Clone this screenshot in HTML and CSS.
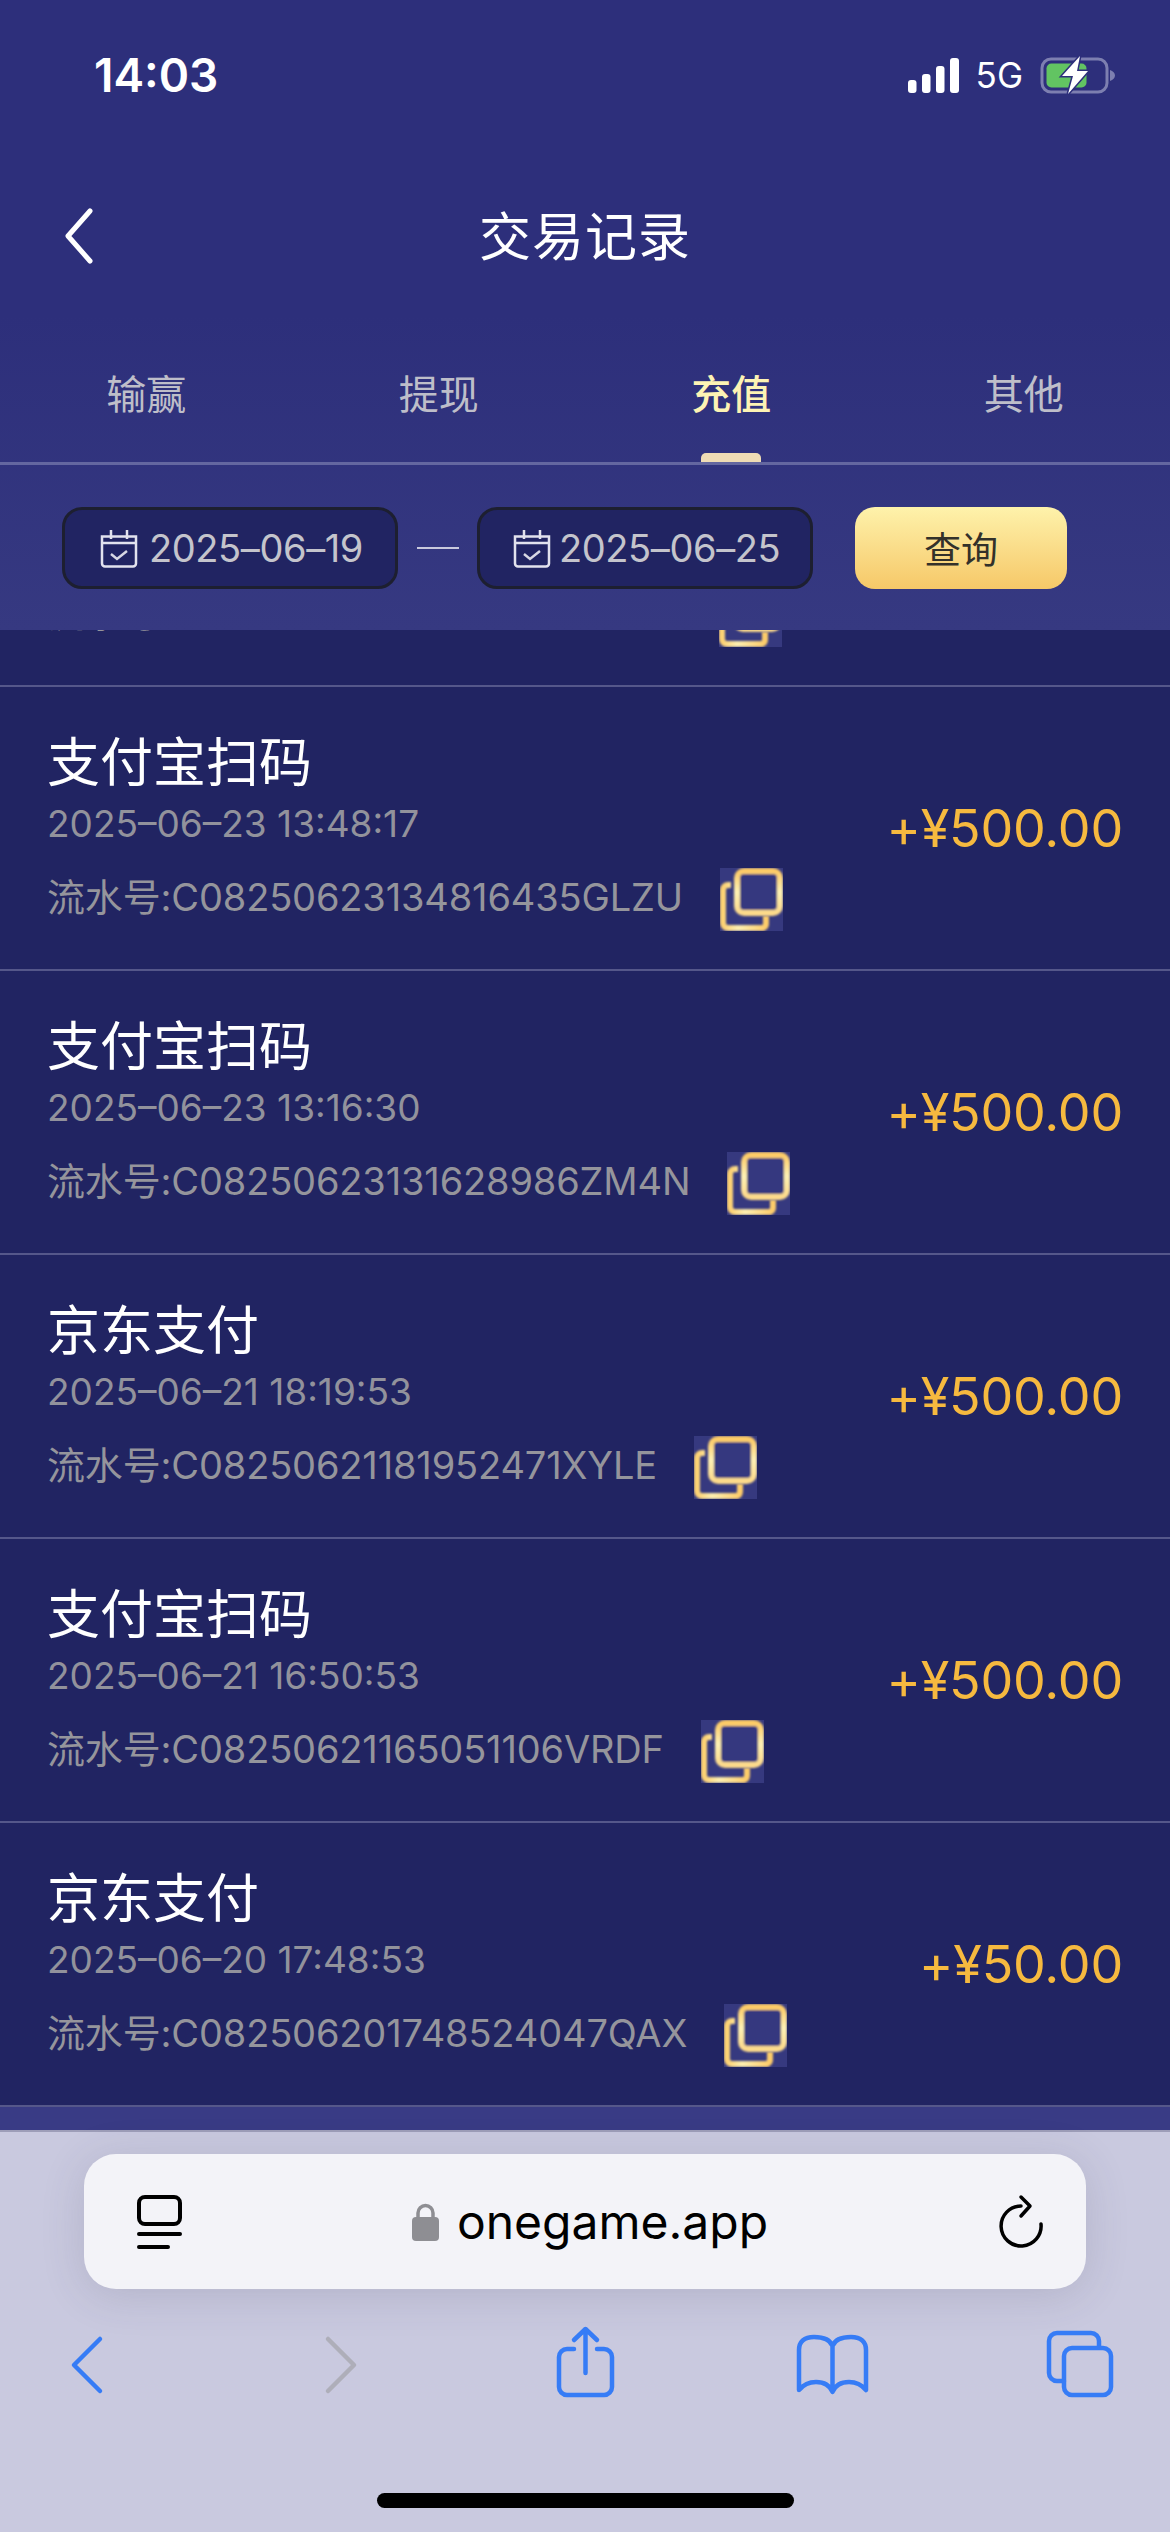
FILE: index.html
```html
<!DOCTYPE html>
<html lang="zh-CN">
<head>
<meta charset="utf-8">
<title>交易记录</title>
<link rel="stylesheet" href="styles.css">
</head>
<body>
<svg class="sprite" width="0" height="0" aria-hidden="true">
  <defs>
    <linearGradient id="gold" x1="0" y1="0" x2="1" y2="0">
      <stop offset="0" stop-color="#fcd071"/>
      <stop offset=".35" stop-color="#fdeeb0"/>
      <stop offset="1" stop-color="#fccb69"/>
    </linearGradient>
    <linearGradient id="goldv" x1="0" y1="0" x2="0" y2="1">
      <stop offset="0" stop-color="#fcca66"/>
      <stop offset=".5" stop-color="#fdf0b4"/>
      <stop offset="1" stop-color="#fcd98a"/>
    </linearGradient>
    <filter id="soft" x="-10%" y="-10%" width="120%" height="120%">
      <feGaussianBlur stdDeviation="0.8"/>
    </filter>
    <symbol id="copy" viewBox="0 0 63 63">
      <rect width="63" height="63" fill="#36397f"/>
      <path d="M11 17H8a5 5 0 0 0-5 5v33a5 5 0 0 0 5 5h35a5 5 0 0 0 3-5v-7" fill="none" stroke="url(#gold)" stroke-width="6" filter="url(#soft)"/>
      <rect x="17" y="3" width="43" height="42" rx="7" fill="#36397f" stroke="url(#goldv)" stroke-width="6" filter="url(#soft)"/>
    </symbol>
    <symbol id="cal" viewBox="0 0 38 40">
      <path d="M2 8.500h34v27a3 3 0 0 1-3 3H5a3 3 0 0 1-3-3zM2 15h34M11 2v9M27 2v9" fill="none" stroke="#e2e2ee" stroke-width="2.500"/>
      <path d="M11 26l6 5 10-8" fill="none" stroke="#d8d8e4" stroke-width="2.500"/>
    </symbol>
  </defs>
</svg>

<div class="app">
  <header class="head">
    <div class="status">
      <span class="time">14:03</span>
      <div class="status-right">
        <svg class="signal" width="51" height="35" viewBox="0 0 51 35">
          <rect x="0" y="22" width="8.500" height="13" rx="3" fill="#fff"/>
          <rect x="14" y="16" width="8.500" height="19" rx="3" fill="#fff"/>
          <rect x="28" y="8" width="8.500" height="27" rx="3" fill="#fff"/>
          <rect x="42" y="0" width="9" height="35" rx="3" fill="#fff"/>
        </svg>
        <span class="net">5G</span>
        <svg class="battery" width="75" height="40" viewBox="0 0 75 40">
          <rect x="2" y="4" width="65" height="33" rx="9" fill="none" stroke="#7d7fb0" stroke-width="3"/>
          <rect x="6.500" y="8.500" width="40" height="24" rx="5" fill="#62c462"/>
          <path d="M70 15c3 1 5 3 5 5.500S73 25 70 26z" fill="#7d7fb0"/>
          <path d="M40 1L22 21h11l-5 18 20-23H37z" fill="#fff" stroke="#2d2f7b" stroke-width="3" paint-order="stroke"/>
        </svg>
      </div>
    </div>

    <nav class="nav">
      <svg class="nav-back" width="32" height="56" viewBox="0 0 32 56">
        <path d="M27 3L5 28l22 25" fill="none" stroke="#fff" stroke-width="5" stroke-linecap="round" stroke-linejoin="round"/>
      </svg>
      <h1 class="nav-title">交易记录</h1>
      <span></span>
    </nav>

    <div class="tabs">
      <div class="tab">输赢</div>
      <div class="tab">提现</div>
      <div class="tab tab-active">充值</div>
      <div class="tab">其他</div>
    </div>

    <div class="filter">
      <div class="date">
        <svg class="date-icon"><use href="#cal"/></svg>
        <span>2025–06–19</span>
      </div>
      <span class="dash"></span>
      <div class="date date-end">
        <svg class="date-icon"><use href="#cal"/></svg>
        <span>2025–06–25</span>
      </div>
      <button class="query">查询</button>
    </div>
  </header>

  <main class="list-wrap">
    <div class="list">
      <article class="row row-clipped">
        <div class="row-main">
          <div class="row-flow"><span>流水号:</span><svg class="copy copy-clipped"><use href="#copy"/></svg></div>
        </div>
      </article>
      <article class="row">
        <div class="row-main">
          <div class="row-title">支付宝扫码</div>
          <div class="row-date">2025–06–23 13:48:17</div>
          <div class="row-flow"><span>流水号:C08250623134816435GLZU</span><svg class="copy"><use href="#copy"/></svg></div>
        </div>
        <div class="row-amount">+¥500.00</div>
      </article>
      <article class="row">
        <div class="row-main">
          <div class="row-title">支付宝扫码</div>
          <div class="row-date">2025–06–23 13:16:30</div>
          <div class="row-flow"><span>流水号:C08250623131628986ZM4N</span><svg class="copy"><use href="#copy"/></svg></div>
        </div>
        <div class="row-amount">+¥500.00</div>
      </article>
      <article class="row">
        <div class="row-main">
          <div class="row-title">京东支付</div>
          <div class="row-date">2025–06–21 18:19:53</div>
          <div class="row-flow"><span>流水号:C08250621181952471XYLE</span><svg class="copy"><use href="#copy"/></svg></div>
        </div>
        <div class="row-amount">+¥500.00</div>
      </article>
      <article class="row">
        <div class="row-main">
          <div class="row-title">支付宝扫码</div>
          <div class="row-date">2025–06–21 16:50:53</div>
          <div class="row-flow"><span>流水号:C08250621165051106VRDF</span><svg class="copy"><use href="#copy"/></svg></div>
        </div>
        <div class="row-amount">+¥500.00</div>
      </article>
      <article class="row">
        <div class="row-main">
          <div class="row-title">京东支付</div>
          <div class="row-date">2025–06–20 17:48:53</div>
          <div class="row-flow"><span>流水号:C082506201748524047QAX</span><svg class="copy"><use href="#copy"/></svg></div>
        </div>
        <div class="row-amount">+¥50.00</div>
      </article>
    </div>
  </main>

  <footer class="safari">
    <div class="url">
      <svg class="url-tabs" width="45" height="54" viewBox="0 0 45 54">
        <rect x="2" y="2" width="41" height="27" rx="6" fill="none" stroke="#000" stroke-width="4"/>
        <path d="M2 39h41M2 52h29" fill="none" stroke="#000" stroke-width="4" stroke-linecap="round"/>
      </svg>
      <div class="url-host">
        <svg class="lock" width="27" height="38" viewBox="0 0 27 38">
          <path d="M6 17V10a7.500 7.500 0 0 1 15 0v7" fill="none" stroke="#8e8e93" stroke-width="3.500"/>
          <rect x="0" y="14" width="27" height="24" rx="4" fill="#8e8e93"/>
        </svg>
        <span>onegame.app</span>
      </div>
      <svg class="reload" width="46" height="56" viewBox="0 0 46 56">
        <path d="M23 12A20 20 0 1 0 43 30" fill="none" stroke="#000" stroke-width="3.500" stroke-linecap="round"/>
        <path d="M23 3l9 9-9 10" fill="none" stroke="#000" stroke-width="3.500" stroke-linecap="round" stroke-linejoin="round"/>
      </svg>
    </div>

    <div class="tools">
      <svg class="tool" viewBox="0 0 80 80"><path d="M54 17L28 43l26 26" class="blue"/></svg>
      <svg class="tool" viewBox="0 0 80 80"><path d="M33 17l26 26-26 26" class="grey"/></svg>
      <svg class="tool" viewBox="0 0 80 80"><path d="M31 27h-7a8 8 0 0 0-8 8v30a8 8 0 0 0 8 8h37a8 8 0 0 0 8-8V35a8 8 0 0 0-8-8h-7M42.500 51V7M31 18L42.500 7 54 18" class="blue"/></svg>
      <svg class="tool" viewBox="0 0 80 80"><path d="M40.500 24C38 17 30 15 22 15 12 15 7 20 7 28v40c5-6 11-8 17-8 8 0 14 4 16.500 10 2.500-6 8.500-10 16.500-10 6 0 12 2 17 8V28c0-8-5-13-15-13-8 0-16 2-18.500 9zM40.500 24v44" class="blue"/></svg>
      <svg class="tool" viewBox="0 0 80 80"><path d="M24 59h-7a8 8 0 0 1-8-8V19a8 8 0 0 1 8-8h34a8 8 0 0 1 8 8v6" class="blue"/><rect x="24" y="26" width="47" height="47" rx="8" class="blue"/></svg>
    </div>
    <div class="home"></div>
  </footer>
</div>
</body>
</html>
```

FILE: styles.css
```css
* { box-sizing: border-box; }
html, body { margin: 0; padding: 0; }
body {
  width: 1170px;
  height: 2532px;
  overflow: hidden;
  font-family: Inter, "Noto Sans CJK SC", sans-serif;
  background: #212462;
}
.sprite { position: absolute; }
.app { display: flex; flex-direction: column; height: 2532px; }

.head {
  flex: none;
  background: linear-gradient(180deg, #2d2f7b 0, #2d2f7b 50%, #363981 100%);
}
.status {
  height: 150px;
  display: flex;
  align-items: center;
  justify-content: space-between;
  padding: 0 55px 0 94px;
}
.time { color: #fff; font-size: 46px; font-weight: 600; }
.status-right { display: flex; align-items: center; }
.net { color: #fff; font-size: 35px; margin: 0 17px 0 17px; }

.nav {
  height: 166px;
  display: grid;
  grid-template-columns: 1fr auto 1fr;
  align-items: center;
  padding: 0 63px;
}
.nav-back { margin-top: 5px; }
.nav-title {
  margin: 0;
  color: #fff;
  font-size: 52px;
  font-weight: 400;
  letter-spacing: 1px;
}

.tabs {
  height: 149px;
  display: grid;
  grid-template-columns: repeat(4, 1fr);
  border-bottom: 3px solid #6467a0;
}
.tab {
  position: relative;
  text-align: center;
  color: #bebec9;
  font-size: 40px;
  line-height: 58px;
  padding-top: 50px;
}
.tab-active { color: #fdf3b4; font-weight: 500; }
.tab-active::after {
  content: "";
  position: absolute;
  left: 50%;
  bottom: 0;
  width: 60px;
  height: 9px;
  margin-left: -30px;
  border-radius: 5px 5px 0 0;
  background: #efdcb5;
}

.filter {
  height: 165px;
  display: flex;
  align-items: center;
  padding: 1px 0 0 62px;
}
.date {
  width: 336px;
  height: 82px;
  display: flex;
  align-items: center;
  gap: 11px;
  padding-left: 35px;
  background: #212462;
  border: 3px solid #1d1f30;
  border-radius: 20px;
  color: #c4c4cc;
  font-size: 38px;
  letter-spacing: -.4px;
}
.date-end { padding-left: 33px; gap: 8px; }
.date-icon { width: 38px; height: 40px; flex: none; }
.dash { width: 42px; height: 2px; margin: 0 18px 0 19px; background: #c9c9dd; }
.query {
  width: 212px;
  height: 82px;
  margin-left: 42px;
  border: 0;
  border-radius: 20px;
  background: linear-gradient(180deg, #fef2ab 0%, #f6c868 100%);
  color: #33312a;
  font-family: inherit;
  font-size: 37px;
}

.list-wrap { flex: 1; min-height: 0; overflow: hidden; background: #393b85; }
.list { margin-top: -227px; background: #212462; }
.row {
  height: 284px;
  display: flex;
  justify-content: space-between;
  align-items: flex-start;
  padding: 39.5px 47px 0;
  border-bottom: 2px solid #55578a;
}
.row-clipped { align-items: flex-end; padding-bottom: 38px; }
.row-title { color: #fff; font-size: 53px; line-height: 72px; }
.row-date { margin-top: 1px; color: #92929c; font-size: 37px; line-height: 48px; }
.row-flow {
  margin-top: 20.5px;
  display: flex;
  align-items: center;
  gap: 37px;
  color: #95959c;
  font-size: 38px;
  line-height: 48px;
  letter-spacing: -.15px;
}
.row-flow span { padding-bottom: 5px; }
.copy { width: 63px; height: 63px; flex: none; }
.copy-clipped { margin-left: 511px; }
.row-amount {
  align-self: center;
  margin-top: -39.5px;
  color: #f6b93f;
  font-size: 52px;
  letter-spacing: -.2px;
}

.safari {
  flex: none;
  height: 402px;
  padding-top: 24px;
  background: #c9c9df;
  border-top: 2px solid #9d9db8;
}
.url {
  height: 135px;
  margin: -2px 84px 0;
  padding: 0 42px 0 53px;
  display: flex;
  align-items: center;
  justify-content: space-between;
  background: #f3f3f8;
  border-radius: 32px;
  box-shadow: 0 6px 44px rgba(60, 60, 90, .16);
}
.url-host { display: flex; align-items: center; gap: 18px; color: #000; font-size: 48px; }
.tools {
  display: flex;
  gap: 168.5px;
  padding-left: 46px;
  margin-top: 33px;
}
.tool { width: 80px; height: 80px; flex: none; }
.blue { fill: none; stroke: #367cf6; stroke-width: 4.500; stroke-linecap: round; stroke-linejoin: round; }
.grey { fill: none; stroke: #aeaeb9; stroke-width: 4.500; stroke-linecap: round; stroke-linejoin: round; }
.home { width: 417px; height: 15px; margin: 91px auto 0; border-radius: 8px; background: #000; }
```
